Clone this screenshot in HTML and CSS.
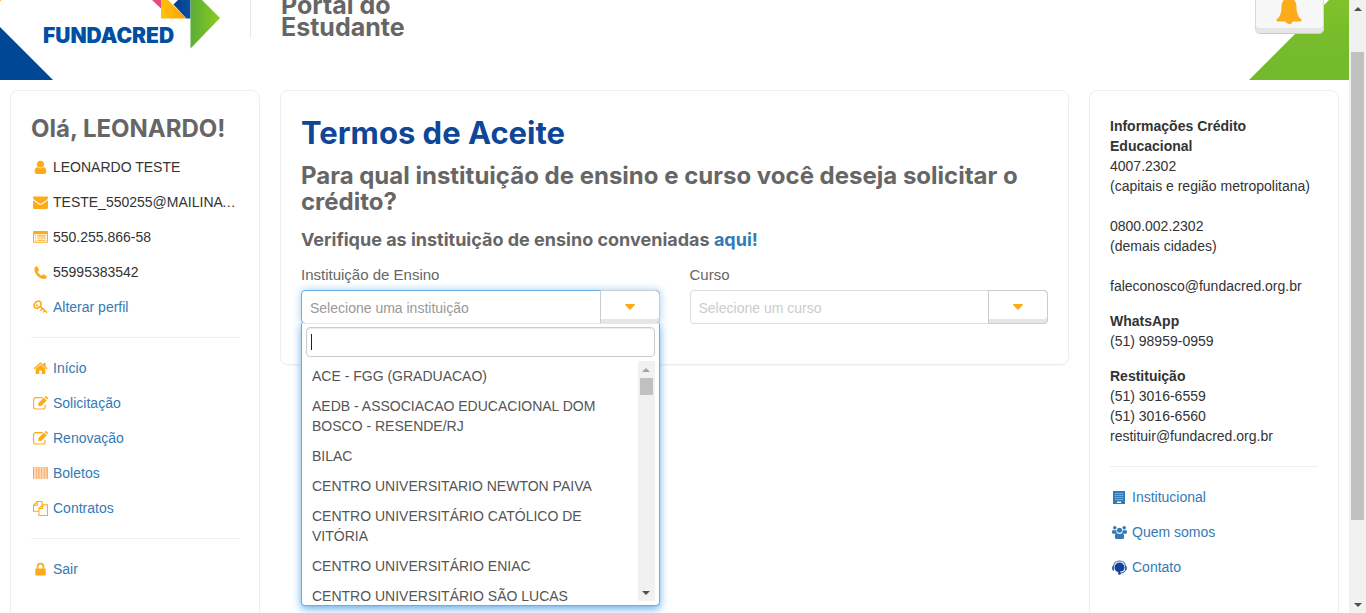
FILE: index.html
```html
<!DOCTYPE html>
<html lang="pt-BR">
<head>
<meta charset="utf-8">
<meta name="viewport" content="width=device-width, initial-scale=1">
<title>Portal do Estudante</title>
<link rel="stylesheet" href="styles.css">
</head>
<body>
<div class="viewport">
  <div class="page">
    <header class="header">
      <svg class="corner corner-left" viewBox="0 0 53 80" aria-hidden="true"><path d="M0 27 53 80H0Z" fill="#004896"/><path d="M0 0h1.500L0 1.500Z" fill="#fdb813"/></svg>
      <svg class="corner corner-right" viewBox="0 0 100 80" aria-hidden="true"><defs><linearGradient id="cg" x2="0" y2="1"><stop stop-color="#80c22a"/><stop offset=".5" stop-color="#76bc2b"/><stop offset="1" stop-color="#72b92c"/></linearGradient></defs><path d="M80 0h20v80H0Z" fill="url(#cg)"/></svg>
      <a class="brand" href="#" aria-label="Fundacred">
        <svg class="brand-logo" viewBox="0 0 180 50">
          <defs>
            <linearGradient id="lo"><stop stop-color="#ffc20e"/><stop offset="1" stop-color="#ff9e00"/></linearGradient>
            <linearGradient id="lg"><stop stop-color="#5bac37"/><stop offset="1" stop-color="#8ccc1e"/></linearGradient>
            <linearGradient id="lb"><stop stop-color="#003b86"/><stop offset="1" stop-color="#0a50a5"/></linearGradient>
          </defs>
          <path d="M112 0h9v8.500Z" fill="#e6487f"/>
          <path d="M121 0h7l18.500 18.500H121Z" fill="url(#lo)"/>
          <path d="M133.500 4.500 138 0h12.500v18.500h-4Z" fill="url(#lb)"/>
          <path d="M150.500 0h11.500l18 18-29.500 30.500Z" fill="url(#lg)"/>
          <text class="brand-name" x="3" y="43">FUNDACRED</text>
        </svg>
      </a>
      <div class="portal-title">Portal do<br>Estudante</div>
      <button class="bell" type="button" aria-label="Notificações">
        <svg viewBox="0 0 26 28"><path d="M13 0C8 0 5.500 4 5.500 9c0 7-2 10-4.800 12.500-.8 1 0 2 1 2H9.500a3.600 3.600 0 0 0 7 0h7.800c1 0 1.800-1 1-2C22.500 19 20.500 16 20.500 9 20.500 4 18 0 13 0Z" fill="#fdab18"/><path d="M10.500 24.500c.3 1.200 1.200 1.800 2.400 1.900" fill="none" stroke="#fff" stroke-width=".7"/></svg>
      </button>
    </header>

    <main class="columns">
      <aside class="card profile">
        <h2 class="heading">Olá, LEONARDO!</h2>
        <ul class="rows">
          <li><svg class="icon" viewBox="0 0 14 14"><circle cx="7" cy="4" r="3.300"/><path d="M4 6.500C2.200 7 1.500 8.800 1.500 11c0 1.300.8 2 2 2h7c1.200 0 2-.7 2-2 0-2.200-.7-4-2.500-4.500a4.200 4.200 0 0 1-6 0Z"/></svg><span>LEONARDO TESTE</span></li>
          <li><svg class="icon" viewBox="0 0 14 14"><path d="M0 2.500C0 1.800.5 1.300 1.200 1.300h11.600c.7 0 1.200.5 1.200 1.200 0 .9-.6 1.600-1.300 2.100L8.300 7.700c-.8.600-1.800.6-2.600 0L1.300 4.600C.6 4.100 0 3.400 0 2.500Z"/><path d="M0 4.800 5.200 8.600c1.100.8 2.500.8 3.600 0L14 4.800v6.900c0 .7-.5 1.300-1.200 1.300H1.200C.5 13 0 12.400 0 11.700Z"/></svg><span>TESTE_550255@MAILINATOR.COM</span></li>
          <li><svg class="icon" viewBox="0 0 14 14"><path fill-rule="evenodd" d="M1.200 1h11.600C13.500 1 14 1.500 14 2.200v8.600c0 .7-.5 1.200-1.200 1.200H1.200C.5 12 0 11.500 0 10.800V2.200C0 1.500.5 1 1.200 1ZM1 4v7h12V4Z"/><path d="M2 5h1v1H2Zm2 0h8v1H4ZM2 7h1v1H2Zm2 0h8v1H4ZM2 9h1v1H2Zm2 0h8v1H4Z"/></svg><span>550.255.866-58</span></li>
          <li><svg class="icon" viewBox="0 0 14 14"><path d="M4 1.500 5.500 4.300c.2.500 0 .8-.4 1.200-.6.500-.8.700-.5 1.300.8 1.300 1.700 2.200 3 3 .6.300.8 0 1.300-.6.400-.5.700-.6 1.200-.4l2.500 1.400c.6.400.3 1-.1 1.700-.5.800-1.500 1.200-2.500 1.100C5.500 12.600 1.500 8.500 1.300 4c0-1 .3-2 1.100-2.400C3.100 1.100 3.700 1 4 1.500Z"/></svg><span>55995383542</span></li>
          <li><svg class="icon line" viewBox="0 0 14 14"><path d="M1.200 6.500c-.8-2 .6-4.700 3-5.300 2-.5 3.700.8 3.400 2.800-.4 2.500-3.500 4.200-5.400 3.500Z" stroke-width="1.500"/><circle cx="3.500" cy="5" r=".6"/><path d="m6.500 5.800 6.300 5.400M8.500 8.200 7 10m4-.4-1.500 1.900m3.200-.5-.5 1" stroke-width="1.500"/></svg><a href="#">Alterar perfil</a></li>
        </ul>
        <hr class="rule">
        <ul class="rows">
          <li><svg class="icon" viewBox="0 0 14 14"><path d="m7 3.500 4.500 3.800v4.400c0 .3-.2.500-.5.500H8.200V8.800H5.800v3.400H3c-.3 0-.5-.2-.5-.5V7.300Z"/><path d="M7 1.200 9.700 3.500V1.800h2v3.400L13.500 6.700l-.8.900L7 2.800 1.300 7.600l-.8-.9Z"/></svg><a href="#">Início</a></li>
          <li><svg class="icon line" viewBox="0 0 14 14"><path d="M9 1.500H2.700C1.500 1.500.6 2.300.6 3.500v6.700c0 1.200.9 2 2.100 2h6.600c1.200 0 2-.8 2-2V8.500"/><path class="solid" d="m5 6.700 5.200-5.200 2.600 2.600-5.200 5.200H5ZM10.900.9l.5-.5c.4-.4.9-.4 1.300 0l1 1c.4.4.4.900 0 1.300l-.4.500Z"/></svg><a href="#">Solicitação</a></li>
          <li><svg class="icon line" viewBox="0 0 14 14"><path d="M9 1.500H2.700C1.500 1.500.6 2.300.6 3.500v6.700c0 1.200.9 2 2.100 2h6.600c1.200 0 2-.8 2-2V8.500"/><path class="solid" d="m5 6.700 5.200-5.200 2.600 2.600-5.200 5.200H5ZM10.900.9l.5-.5c.4-.4.9-.4 1.300 0l1 1c.4.4.4.900 0 1.300l-.4.500Z"/></svg><a href="#">Renovação</a></li>
          <li><svg class="icon" viewBox="0 0 14 14"><path d="M0 1h14v11H0Z" fill="#ffd9b8"/><path d="M0 1h1v11H0Zm3 0h.7v11H3Zm2 0h1v11H5Zm2.500 0h.7v11h-.7ZM10 1h.8v11H10Zm2 0h.6v11H12Zm1.300 0h.7v11h-.7Z" fill="#fba55e"/></svg><a href="#">Boletos</a></li>
          <li><svg class="icon line" viewBox="0 0 14 14"><path d="M5 9.500H.5V4L4 .5h4.500v3M4 .5V4H.5M9 3.500h4.500v10h-8V7L9 3.500V7H5.500"/></svg><a href="#">Contratos</a></li>
        </ul>
        <hr class="rule">
        <ul class="rows">
          <li><svg class="icon" viewBox="0 0 14 14"><path fill-rule="evenodd" d="M3.500 6V4.200a3.500 3.500 0 0 1 7 0V6h.5c.5 0 .9.400.9.900v4.700c0 .5-.4.900-.9.900H3c-.5 0-.9-.4-.9-.9V6.900c0-.5.4-.9.900-.9Zm1.600 0h3.800V4.200a1.900 1.900 0 0 0-3.800 0Z"/></svg><a href="#">Sair</a></li>
        </ul>
      </aside>

      <section class="card terms">
        <h1 class="title">Termos de Aceite</h1>
        <h2 class="heading question">Para qual instituição de ensino e curso você deseja solicitar o crédito?</h2>
        <h3 class="subheading">Verifique as instituição de ensino conveniadas <a href="#">aqui!</a></h3>
        <div class="fields">
          <div class="field">
            <label id="lbl-inst" for="inst">Instituição de Ensino</label>
            <div class="combo combo-open">
              <button class="combo-toggle" id="inst" type="button" aria-haspopup="listbox" aria-expanded="true"><span class="combo-text">Selecione uma instituição</span><span class="combo-arrow"><svg viewBox="0 0 10 6"><path d="M.8 0h8.400c.8 0 1 .8.500 1.300L5.600 5.500c-.3.400-.9.400-1.200 0L.3 1.300C-.2.800 0 0 .8 0Z"/></svg></span></button>
              <div class="menu">
                <input class="search" type="text" aria-label="Buscar instituição">
                <div class="menu-body">
                  <ul class="options" role="listbox" aria-labelledby="lbl-inst">
                    <li role="option">ACE - FGG (GRADUACAO)</li>
                    <li role="option">AEDB - ASSOCIACAO EDUCACIONAL DOM BOSCO - RESENDE/RJ</li>
                    <li role="option">BILAC</li>
                    <li role="option">CENTRO UNIVERSITARIO NEWTON PAIVA</li>
                    <li role="option">CENTRO UNIVERSITÁRIO CATÓLICO DE VITÓRIA</li>
                    <li role="option">CENTRO UNIVERSITÁRIO ENIAC</li>
                    <li role="option">CENTRO UNIVERSITÁRIO SÃO LUCAS</li>
                  </ul>
                  <div class="scrollbar" aria-hidden="true"><span class="arrow up dim"></span><span class="thumb thumb-list"></span><span class="arrow down"></span></div>
                </div>
              </div>
            </div>
          </div>
          <div class="field">
            <label for="curso">Curso</label>
            <div class="combo combo-disabled">
              <button class="combo-toggle" id="curso" type="button" aria-haspopup="listbox"><span class="combo-text">Selecione um curso</span><span class="combo-arrow"><svg viewBox="0 0 10 6"><path d="M.8 0h8.400c.8 0 1 .8.500 1.300L5.600 5.500c-.3.400-.9.400-1.200 0L.3 1.300C-.2.800 0 0 .8 0Z"/></svg></span></button>
            </div>
          </div>
        </div>
      </section>

      <aside class="card info">
        <p><strong>Informações Crédito Educacional</strong><br>4007.2302<br>(capitais e região metropolitana)<br><br>0800.002.2302<br>(demais cidades)<br><br>faleconosco@fundacred.org.br</p>
        <p><strong>WhatsApp</strong><br>(51) 98959-0959</p>
        <p><strong>Restituição</strong><br>(51) 3016-6559<br>(51) 3016-6560<br>restituir@fundacred.org.br</p>
        <hr class="rule">
        <ul class="rows blue">
          <li><svg class="icon" viewBox="0 0 15 15"><path d="M1 1h12v13H1Z"/><path d="M3 3.500h8M3 5.500h8M3 7.500h8M3 9.500h8" fill="none" stroke="#d9a9bf" stroke-dasharray="1.500 .66" stroke-width=".9"/><path d="M5 11.500h4V13H5Z" fill="#fff"/></svg><a href="#">Institucional</a></li>
          <li><svg class="icon" viewBox="0 0 16 14"><circle cx="3" cy="2" r="1.900"/><circle cx="13" cy="2" r="1.900"/><circle cx="8" cy="4.500" r="2.700"/><path d="M1.400 4.300C.4 4.500 0 5.500 0 7c0 .8.500 1.200 1.300 1.200h2.600C4.300 7.500 5 7.100 5.400 7c-.7-.7-1-1.700-.8-2.700-1 .5-2.200.6-3.200 0ZM14.600 4.300C15.600 4.500 16 5.500 16 7c0 .8-.5 1.200-1.300 1.200h-2.600c-.4-.7-1.100-1.100-1.500-1.200.7-.7 1-1.700.8-2.700 1 .5 2.200.6 3.200 0ZM5.300 7.600C3.500 7.800 3 9.700 3 11.700c0 1.300.8 2.200 2.100 2.200h5.800c1.300 0 2.100-.9 2.100-2.200 0-2-.5-3.900-2.300-4.100-1.700 1.300-3.700 1.300-5.400 0Z"/></svg><a href="#">Quem somos</a></li>
          <li><svg class="icon" viewBox="0 0 16 16"><path d="M1.500 7C2 3 4.500 1 8 1s6 2 6.500 6" fill="none" stroke="#7f9cc9" stroke-width="1.500"/><circle cx="8" cy="8" r="5.300" fill="#16409a"/><path d="M2.200 5.500C.8 5.700 0 6.800 0 8.500s.8 3 2.200 3.200ZM13.800 5.500c1.400.2 2.200 1.300 2.200 3s-.8 3-2.200 3.200Z" fill="#3c62aa"/><path d="M13 11c-1 1.300-2 1.700-4.500 1.700" fill="none" stroke="#fff" stroke-width="1"/><path d="M14 11.500c-1 1.600-2.500 2.500-5 2.700" fill="none" stroke="#4468ad" stroke-width="1.200"/><circle cx="8" cy="14.300" r="1.500" fill="#16409a"/></svg><a href="#">Contato</a></li>
        </ul>
      </aside>
    </main>
  </div>
  <div class="scrollbar" aria-hidden="true"><span class="arrow up"></span><span class="track"><span class="thumb thumb-page"></span></span><span class="arrow down"></span></div>
</div>
</body>
</html>
```
FILE: styles.css
```css
* { box-sizing: border-box; }

body {
  margin: 0;
  background: #fff;
  color: #333;
  font: 14px/20px "Liberation Sans", Arial, sans-serif;
}

a { color: #337ab7; text-decoration: none; }
h1, h2, h3, p, ul { margin: 0; padding: 0; }
ul { list-style: none; }
button, input { font: inherit; }

.viewport { display: flex; height: 100vh; overflow: hidden; }
.page { flex: 1; min-width: 0; }

/* Header */
.header {
  position: relative;
  display: flex;
  align-items: flex-end;
  height: 80px;
  overflow: hidden;
}
.corner { position: absolute; bottom: 0; height: 80px; }
.corner-left { left: 0; width: 53px; }
.corner-right { right: 0; width: 100px; }
.brand { position: relative; margin: 0 30px 30px 40px; }
.brand-logo { display: block; width: 180px; height: 50px; }
.brand-name { font: 900 21px Inter, sans-serif; fill: #004fa3; }
.portal-title {
  margin-bottom: 42px;
  padding: 12px 0 0 30px;
  border-left: 1px solid #e7e7e7;
  color: #666;
  font: 700 25px/22px Inter, sans-serif;
}
.bell {
  position: relative;
  width: 69px;
  height: 60px;
  margin: 0 25px 46px auto;
  padding: 16px 0 0;
  border: 1px solid #d9d9d9;
  border-bottom-color: #ccc;
  border-radius: 5px;
  background: #f7f7f7;
  box-shadow: inset 0 -5px 0 #e6e6e6;
}
.bell svg { display: block; width: 26px; height: 28px; margin: 0 20px; }

/* Columns */
.columns {
  display: grid;
  grid-template-columns: 250px minmax(0, 1fr) 250px;
  align-items: start;
  gap: 20px;
  padding: 10px;
}
.card {
  padding: 25px 20px 40px;
  border: 1px solid #eee;
  border-radius: 8px;
  box-shadow: 0 1px 1px rgba(0, 0, 0, .04);
}
.heading { color: #666; font: 700 24px/26px Inter, sans-serif; white-space: nowrap; }
.title { color: #0f4695; font: 700 31px/33px Inter, sans-serif; }
.question { margin: 14px 0 15px; white-space: normal; }
.subheading { margin-bottom: 15px; color: #666; font: 700 18px/20px Inter, sans-serif; }

.rows { display: grid; gap: 15px; }
.profile .heading + .rows { margin-top: 15px; }
.rows li { display: flex; align-items: center; gap: 5px; min-width: 0; padding-left: 2px; }
.rows span { overflow: hidden; text-overflow: ellipsis; white-space: nowrap; }
.icon { flex: none; width: 15px; height: 15px; fill: #fdab18; }
.icon.line { fill: none; stroke: #fdab18; }
.icon .solid { fill: #fdab18; stroke: none; }
.blue .icon { fill: #337ab7; }
.rule { margin: 20px 0; border: 0; border-top: 1px solid #eee; }
.info p + p { margin-top: 15px; }

/* Form */
.fields { display: grid; grid-template-columns: 1fr 1fr; gap: 30px; }
.field label { display: block; margin-bottom: 5px; color: #666; font-size: 15px; }
.combo { position: relative; }
.combo-toggle {
  display: flex;
  width: 100%;
  height: 34px;
  padding: 0;
  border: 1px solid #ddd;
  border-radius: 4px;
  background: #fff;
  color: #999;
  text-align: left;
}
.combo-text { flex: 1; padding: 7px 8px 0; line-height: 20px; }
.combo-arrow {
  display: flex;
  align-items: center;
  justify-content: center;
  width: 60px;
  margin: -1px;
  border: 1px solid #ccc;
  border-radius: 0 4px 4px 0;
  box-shadow: inset 0 -4px 0 #e6e6e6;
}
.combo-arrow svg { width: 10px; height: 6px; fill: #fdab18; }
.combo-disabled .combo-text { color: #ccc; }
.combo-open .combo-toggle { border-color: #66afe9; box-shadow: 0 0 8px rgba(102, 175, 233, .6); }

.menu {
  position: absolute;
  top: 33px;
  left: 0;
  right: 0;
  padding: 4px;
  border: 1px solid #66afe9;
  border-top-color: #e7eaec;
  border-radius: 0 0 4px 4px;
  background: #fff;
  box-shadow: 0 3px 8px #66afe9;
  clip-path: inset(0 -12px -16px);
}
.search {
  display: block;
  width: 100%;
  height: 30px;
  margin-top: -1px;
  padding: 4px;
  border: 1px solid #ccc;
  border-radius: 4px;
  outline: 0;
  background: linear-gradient(#222, #222) 4px 6px / 1px 16px no-repeat;
  box-shadow: inset 0 1px 1px rgba(0, 0, 0, .08);
}
.search:focus { background: none; }
.menu-body { display: flex; height: 240px; margin-top: 4px; overflow: hidden; }
.options { flex: 1; color: #555; }
.options li { padding: 5px 6px; }

/* Scrollbars */
.scrollbar {
  display: flex;
  flex: none;
  flex-direction: column;
  align-items: center;
  width: 17px;
  background: #f1f1f1;
}
.arrow { display: flex; flex: none; align-items: center; justify-content: center; width: 17px; height: 17px; }
.arrow::before { content: ""; border: 4px solid transparent; border-top: 0; border-bottom-color: #505050; }
.arrow.down::before { border-top: 4px solid #505050; border-bottom: 0; }
.arrow.dim::before { border-bottom-color: #a3a3a3; }
.arrow.down { margin-top: auto; }
.thumb { display: block; width: 13px; background: #c1c1c1; }
.thumb-list { height: 17px; }
.track { display: flex; flex: 1; flex-direction: column; padding-top: 35px; }
.thumb-page { height: 86%; }
```
